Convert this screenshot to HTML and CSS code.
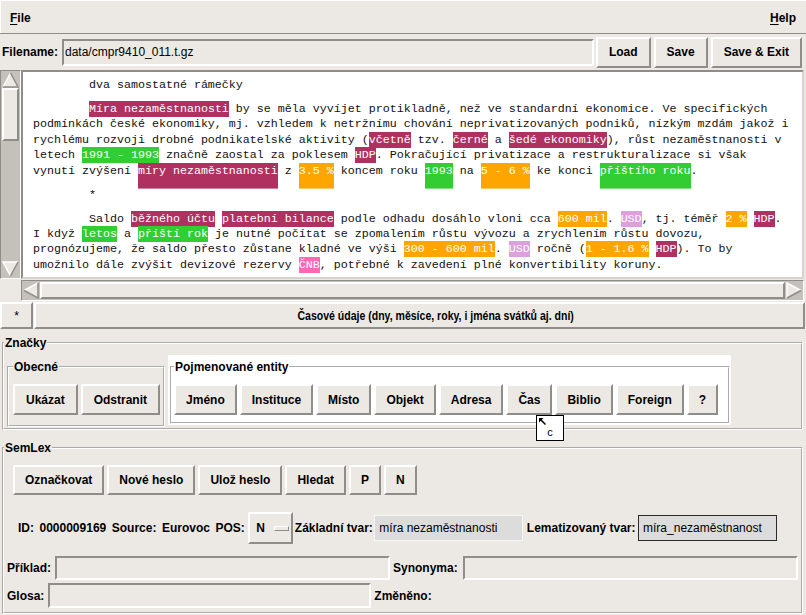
FILE: index.html
```html
<!DOCTYPE html>
<html lang="cs">
<head>
<meta charset="utf-8">
<title>Anotace</title>
<link rel="stylesheet" href="styles.css">
</head>
<body>
<div class="app">
  <header class="menubar">
    <span class="menu"><u>F</u>ile</span>
    <span class="menu"><u>H</u>elp</span>
  </header>

  <div class="filerow">
    <span class="lbl">Filename:</span>
    <div class="entry sunken file-entry">data/cmpr9410_011.t.gz</div>
    <button class="btn">Load</button>
    <button class="btn">Save</button>
    <button class="btn">Save &amp; Exit</button>
  </div>

  <div class="editor">
    <div class="vscroll">
      <svg class="sb-arrow" width="17" height="16" viewBox="0 0 17 16"><polygon class="a-fill" points="8.5,1 16,15 1,15"/><path class="a-light" d="M1 15 L8.5 1"/><path class="a-dark" d="M8.5 1 L16 15 L1 15"/></svg>
      <div class="vthumb"></div>
      <div class="sb-space"></div>
      <svg class="sb-arrow" width="17" height="16" viewBox="0 0 17 16"><polygon class="a-fill" points="1,1 16,1 8.5,15"/><path class="a-light" d="M8.5 15 L1 1 L16 1"/><path class="a-dark" d="M16 1 L8.5 15"/></svg>
    </div>
    <div class="textbox">
      <div class="para">
        <div class="ln">        dva samostatné rámečky</div>
      </div>
      <div class="para">
        <div class="ln">        <span class="hl org">Míra nezaměstnanosti</span> by se měla vyvíjet protikladně, než ve standardní ekonomice. Ve specifických</div>
        <div class="ln">podmínkách české ekonomiky, mj. vzhledem k netržnímu chování neprivatizovaných podniků, nízkým mzdám jakož i</div>
        <div class="ln">rychlému rozvoji drobné podnikatelské aktivity (<span class="hl org">včetně</span> tzv. <span class="hl org">černé</span> a <span class="hl org">šedé ekonomiky</span>), růst nezaměstnanosti v</div>
        <div class="ln">letech <span class="hl time">1991 - 1993</span> značně zaostal za poklesem <span class="hl org">HDP</span>. Pokračující privatizace a restrukturalizace si však</div>
        <div class="ln">vynutí zvýšení <span class="hl org tall">míry nezaměstnanosti</span> z <span class="hl num tall">3.5 %</span> koncem roku <span class="hl time tall">1993</span> na <span class="hl num tall">5 - 6 %</span> ke konci <span class="hl time tall">příštího roku</span>.</div>
      </div>
      <div class="para">
        <div class="ln">        *</div>
      </div>
      <div class="para">
        <div class="ln">        Saldo <span class="hl org">běžného účtu</span> <span class="hl org">platební bilance</span> podle odhadu dosáhlo vloni cca <span class="hl num">600 mil</span>. <span class="hl cur">USD</span>, tj. téměř <span class="hl num">2 %</span> <span class="hl org">HDP</span>.</div>
        <div class="ln">I když <span class="hl time">letos</span> a <span class="hl time">příští rok</span> je nutné počítat se zpomalením růstu vývozu a zrychlením růstu dovozu,</div>
        <div class="ln">prognózujeme, že saldo přesto zůstane kladné ve výši <span class="hl num">300 - 600 mil</span>. <span class="hl cur">USD</span> ročně (<span class="hl num">1 - 1.6 %</span> <span class="hl org">HDP</span>). To by</div>
        <div class="ln">umožnilo dále zvýšit devizové rezervy <span class="hl ins">ČNB</span>, potřebné k zavedení plné konvertibility koruny.</div>
      </div>
    </div>
    <div class="hscroll">
      <svg class="sb-arrow" width="16" height="17" viewBox="0 0 16 17"><polygon class="a-fill" points="1,8.5 15,1 15,16"/><path class="a-light" d="M1 8.5 L15 1"/><path class="a-dark" d="M15 1 L15 16 L1 8.5"/></svg>
      <div class="hthumb"></div>
      <svg class="sb-arrow" width="16" height="17" viewBox="0 0 16 17"><polygon class="a-fill" points="15,8.5 1,1 1,16"/><path class="a-light" d="M1 16 L1 1 L15 8.5"/><path class="a-dark" d="M15 8.5 L1 16"/></svg>
    </div>
  </div>

  <div class="tagrow">
    <button class="btn star">*</button>
    <button class="btn tagdesc"><span class="tagdesc-text">Časové údaje (dny, měsíce, roky, i jména svátků aj. dní)</span></button>
  </div>

  <fieldset class="group znacky">
    <legend>Značky</legend>
    <div class="znacky-row">
      <fieldset class="group obecne">
        <legend>Obecné</legend>
        <div class="btnrow">
          <button class="btn">Ukázat</button>
          <button class="btn">Odstranit</button>
        </div>
      </fieldset>
      <div class="entities-wrap">
        <fieldset class="group entities">
          <legend>Pojmenované entity</legend>
          <div class="btnrow">
            <button class="btn">Jméno</button>
            <button class="btn">Instituce</button>
            <button class="btn">Místo</button>
            <button class="btn">Objekt</button>
            <button class="btn">Adresa</button>
            <button class="btn">Čas</button>
            <button class="btn">Biblio</button>
            <button class="btn">Foreign</button>
            <button class="btn">?</button>
          </div>
        </fieldset>
      </div>
    </div>
  </fieldset>

  <fieldset class="group semlex">
    <legend>SemLex</legend>
    <div class="btnrow semlex-buttons">
      <button class="btn">Označkovat</button>
      <button class="btn">Nové heslo</button>
      <button class="btn">Ulož heslo</button>
      <button class="btn">Hledat</button>
      <button class="btn">P</button>
      <button class="btn">N</button>
    </div>
    <div class="id-row">
      <span class="lbl">ID:</span>
      <span class="lbl">0000009169</span>
      <span class="lbl">Source:</span>
      <span class="lbl">Eurovoc</span>
      <span class="lbl">POS:</span>
      <div class="menubtn"><span>N</span><span class="indicator"></span></div>
      <span class="lbl">Základní tvar:</span>
      <div class="entry flat base-entry">míra nezaměstnanosti</div>
      <span class="lbl lemma-lbl">Lematizovaný tvar:</span>
      <div class="entry flat focus lemma-entry">míra_nezaměstnanost</div>
    </div>
    <div class="form-row ex-row">
      <span class="lbl">Příklad:</span>
      <div class="entry sunken ex-entry"></div>
      <span class="lbl">Synonyma:</span>
      <div class="entry sunken syn-entry"></div>
    </div>
    <div class="form-row gl-row">
      <span class="lbl">Glosa:</span>
      <div class="entry sunken gl-entry"></div>
      <span class="lbl">Změněno:</span>
    </div>
  </fieldset>

  <div class="tooltip">
    <svg class="cursor" width="9" height="9" viewBox="0 0 9 9"><path d="M1 1 L5.5 1 L3.8 2.7 L8 7 L7 8 L2.7 3.8 L1 5.5 Z"/></svg>
    <span class="tip-text">c</span>
  </div>
</div>
</body>
</html>
```

FILE: styles.css
```css
:root {
  --bg: #ece9e4;
  --dk: #8f8d8a;
  --lt: #ffffff;
  --trough: #c4c1bb;
}

* { box-sizing: border-box; }

html, body {
  margin: 0;
  padding: 0;
  background: var(--bg);
}

body {
  font: bold 12px "Liberation Sans", Arial, sans-serif;
  color: #000;
}

.app {
  position: relative;
  width: 806px;
  height: 615px;
  overflow: hidden;
}

/* menu bar */
.menubar {
  height: 34px;
  padding: 3px 10px 0;
  display: flex;
  justify-content: space-between;
  align-items: center;
  border-bottom: 1px solid var(--dk);
  box-shadow: inset 0 1px 0 var(--lt), inset 1px 0 0 var(--lt);
}
.menu u { text-decoration: underline; text-underline-offset: 2px; }

/* generic widgets */
.lbl { white-space: nowrap; }

.btn {
  height: 31px;
  margin: 0;
  padding: 0 10px;
  font: inherit;
  color: #000;
  background: var(--bg);
  border: 2px solid;
  border-color: var(--lt) var(--dk) var(--dk) var(--lt);
  white-space: nowrap;
  cursor: default;
}

.entry {
  font-weight: normal;
  white-space: nowrap;
  overflow: hidden;
}
.entry.sunken {
  border: 2px solid;
  border-color: var(--dk) var(--lt) var(--lt) var(--dk);
  background: var(--bg);
}
.entry.flat {
  height: 26px;
  line-height: 24px;
  padding-left: 4px;
  background: #dcdcdc;
  border: 1px solid #f6f6f6;
}
.entry.flat.focus { border-color: #2b2b2b; }

/* filename row */
.filerow {
  height: 36px;
  display: flex;
  align-items: center;
  padding: 0 4px 0 2px;
}
.file-entry {
  flex: 1;
  height: 27px;
  line-height: 23px;
  margin: 0 2px 0 4px;
  padding-left: 1px;
}
.filerow .btn { padding: 0 11px; }
.filerow .btn + .btn { margin-left: 3px; }

/* text editor with scrollbars */
.editor {
  display: grid;
  grid-template-columns: 21px 1fr;
  grid-template-rows: 209px 22px;
  padding-right: 2px;
}
.vscroll {
  grid-column: 1;
  grid-row: 1;
  display: flex;
  flex-direction: column;
  align-items: center;
  padding: 1px 0;
  background: var(--trough);
  border: 1px solid;
  border-color: var(--dk) var(--lt) var(--lt) var(--dk);
}
.vthumb {
  width: 17px;
  height: 53px;
  background: var(--bg);
  border: 2px solid;
  border-color: var(--lt) var(--dk) var(--dk) var(--lt);
}
.sb-space { flex: 1; }
.sb-arrow { display: block; flex: none; }
.a-fill { fill: var(--bg); }
.a-light { fill: none; stroke: var(--lt); stroke-width: 1.5; }
.a-dark { fill: none; stroke: var(--dk); stroke-width: 1.5; }

.hscroll {
  grid-column: 2;
  grid-row: 2;
  margin-top: 1px;
  display: flex;
  align-items: center;
  padding: 0 1px;
  background: var(--trough);
  border: 1px solid;
  border-color: var(--dk) var(--lt) var(--lt) var(--dk);
}
.hthumb {
  flex: 1;
  height: 17px;
  margin: 0 1px;
  background: var(--bg);
  border: 2px solid;
  border-color: var(--lt) var(--dk) var(--dk) var(--lt);
}

.textbox {
  grid-column: 2;
  grid-row: 1;
  background: #fff;
  border: 2px solid;
  border-color: var(--dk) #d6d3ce #d6d3ce var(--dk);
  padding: 6px 0 0 10px;
  overflow: hidden;
  font: normal 11.67px "Liberation Mono", "Courier New", monospace;
  line-height: 15.4px;
  color: #111;
}
.para { margin-bottom: 8.6px; }
.ln {
  white-space: pre;
  height: 15.4px;
}
.hl {
  color: #fff;
  background: var(--c);
  box-shadow: 0 -1px 0 var(--c), 0 1px 0 var(--c);
}
.hl.tall { box-shadow: 0 -1px 0 var(--c), 0 1px 0 var(--c), 0 6px 0 var(--c), 0 10.6px 0 var(--c); }
.org  { --c: #b03060; }
.time { --c: #32cd32; }
.num  { --c: #ffa500; }
.cur  { --c: #dda0dd; }
.ins  { --c: #ff69b4; }

/* tag description row */
.tagrow {
  height: 27px;
  margin-top: 1px;
  display: flex;
  gap: 1px;
  padding-right: 1px;
}
.tagrow .btn { height: 27px; }
.star {
  width: 33px;
  padding: 0;
  font-weight: normal;
}
.tagdesc {
  flex: 1;
  padding-left: 42px;
  font: bold 13px "Liberation Sans", Arial, sans-serif;
}
.tagdesc-text {
  display: inline-block;
  transform: scaleX(0.81);
}

/* label frames */
.group {
  margin: 0 3px 0 2px;
  padding: 0;
  min-width: 0;
  border: 2px groove #fff;
}
.group > legend {
  padding: 0 1px;
  margin: 0;
  line-height: 14px;
}

.znacky { margin-top: 7px; padding-bottom: 1px; }
.znacky-row {
  display: flex;
  align-items: flex-start;
  margin-top: 5px;
}
.btnrow { display: flex; gap: 3px; }

.obecne {
  margin: 5px 0 0 3px;
  padding: 10px 3px 10px 4px;
}
.obecne .btn { padding: 0 11px; }
.entities-wrap {
  width: 563px;
  margin-left: 3px;
  background: #fff;
  padding: 5px 1px 1px 2px;
}
.entities {
  margin: 0;
  padding: 10px 2px 7px 2px;
}

.semlex { margin-top: 11px; padding-bottom: 4px; }
.semlex-buttons { margin: 10px 0 0 9px; }
.semlex-buttons .btn { height: 30px; }

.id-row {
  display: flex;
  align-items: center;
  height: 32px;
  margin: 17px 0 0 14px;
  gap: 5.5px;
}
.menubtn {
  display: flex;
  align-items: center;
  gap: 9px;
  width: 45px;
  height: 32px;
  margin: 0 -4px 0 -2px;
  padding-left: 6px;
  border: 2px solid;
  border-color: var(--lt) var(--dk) var(--dk) var(--lt);
}
.indicator {
  width: 15px;
  height: 5px;
  border: 1px solid;
  border-color: var(--lt) var(--dk) var(--dk) var(--lt);
}
.base-entry { width: 149px; margin-left: -4px; }
.lemma-lbl { margin-left: -2px; }
.lemma-entry { width: 139px; margin-left: -3px; }

.form-row {
  display: flex;
  align-items: center;
  margin-left: 3px;
}
.ex-row { margin-top: 12px; height: 24px; }
.gl-row { margin-top: 3px; height: 25px; }
.ex-entry  { width: 335px; height: 24px; margin: 0 3px 0 4px; }
.syn-entry { width: 335px; height: 24px; margin-left: 5px; }
.gl-entry  { width: 323px; height: 25px; margin: 0 3px 0 4px; }

/* tooltip over the "Čas" button */
.tooltip {
  position: absolute;
  left: 536px;
  top: 415px;
  width: 28px;
  height: 26px;
  background: #fff;
  border: 1px solid #000;
  font: normal 11px "Liberation Sans", Arial, sans-serif;
}
.cursor {
  display: block;
  margin: 1px 0 0 1px;
}
.cursor path { fill: #000; }
.tip-text {
  display: block;
  text-align: center;
  line-height: 12px;
}
```
